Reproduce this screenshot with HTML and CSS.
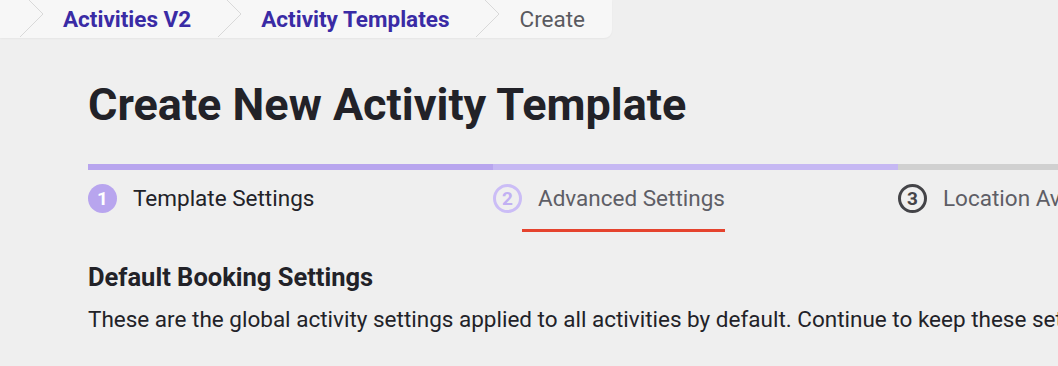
FILE: index.html
```html
<!DOCTYPE html>
<html>
  <head>
    <link rel="stylesheet" href="styles.css">
  </head>
  <body>
    <nav class="breadcrumb">
      <svg class="crumb-sep" width="24" height="38" viewBox="0 0 24 38"><polyline points="7,-2 23,14 0,37" fill="none" stroke="#d9d9d9" stroke-width="1"/></svg>
      <a class="crumb crumb-link">Activities V2</a>
      <svg class="crumb-sep" width="24" height="38" viewBox="0 0 24 38"><polyline points="7,-2 23,14 0,37" fill="none" stroke="#d9d9d9" stroke-width="1"/></svg>
      <a class="crumb crumb-link">Activity Templates</a>
      <svg class="crumb-sep" width="24" height="38" viewBox="0 0 24 38"><polyline points="7,-2 23,14 0,37" fill="none" stroke="#d9d9d9" stroke-width="1"/></svg>
      <span class="crumb crumb-current">Create</span>
    </nav>

    <main class="page">
      <h1 class="title">Create New Activity Template</h1>

      <div class="stepper">
        <div class="step step-done">
          <div class="step-bar"></div>
          <div class="step-body">
            <span class="step-icon">1</span>
            <span class="step-label">Template Settings</span>
          </div>
        </div>
        <div class="step step-active">
          <div class="step-bar"></div>
          <div class="step-body">
            <span class="step-icon">2</span>
            <span class="step-label">Advanced Settings</span>
          </div>
        </div>
        <div class="step step-todo">
          <div class="step-bar"></div>
          <div class="step-body">
            <span class="step-icon">3</span>
            <span class="step-label">Location Availability</span>
          </div>
        </div>
      </div>

      <h2 class="section-title">Default Booking Settings</h2>
      <p class="section-text">
        These are the global activity settings applied to all activities by default. Continue to keep these settings or change them for this template.
      </p>
    </main>
  </body>
</html>
```

FILE: styles.css
```css
body {
  margin: 0;
  background-color: #efefef;
  font-family: Roboto, "Liberation Sans", Arial, sans-serif;
  color: #222228;
  overflow: hidden;
}

.breadcrumb {
  display: flex;
  align-items: center;
  width: fit-content;
  height: 38px;
  padding-left: 20px;
  background-color: #f7f7f7;
  border-bottom-right-radius: 8px;
  box-shadow: 0 1px 2px rgba(0, 0, 0, 0.04);
}

.crumb-sep {
  display: block;
  flex-shrink: 0;
}

.crumb {
  font-size: 22.5px;
  line-height: 38px;
  padding: 0 27px 0 19px;
  white-space: nowrap;
}

.crumb-link {
  color: #3a2ba5;
  font-weight: 700;
  text-decoration: none;
}

.crumb-current {
  color: #5a5a60;
}

.page {
  padding-left: 88px;
  width: 1215px;
}

.title {
  font-size: 45px;
  font-weight: 700;
  line-height: 54px;
  margin: 40px 0 32px;
}

.stepper {
  display: flex;
}

.step {
  flex: 0 0 405px;
}

.step-bar {
  height: 6px;
  background-color: #d0d0d0;
}

.step-done .step-bar {
  background-color: #b8a5ee;
}

.step-active .step-bar {
  background-color: #c6b8f3;
}

.step-body {
  display: flex;
  align-items: flex-start;
  padding-top: 14px;
}

.step-icon {
  display: flex;
  align-items: center;
  justify-content: center;
  width: 29px;
  height: 29px;
  border-radius: 50%;
  box-sizing: border-box;
  font-size: 19px;
  font-weight: 700;
  flex-shrink: 0;
}

.step-done .step-icon {
  background-color: #b8a5ee;
  color: #fff;
}

.step-active .step-icon {
  border: 3px solid #cbbdf6;
  color: #c1b0f3;
}

.step-todo .step-icon {
  border: 3px solid #444448;
  color: #444448;
}

.step-label {
  font-size: 22.5px;
  line-height: 29px;
  padding: 0 0 16px 16px;
  white-space: nowrap;
}

.step-done .step-label {
  color: #222228;
}

.step-active .step-label,
.step-todo .step-label {
  color: #5e5e66;
}

.step-active .step-label {
  border-bottom: 3px solid #e5432e;
}

.section-title {
  font-size: 25.5px;
  font-weight: 700;
  margin: 30px 0 12px;
  line-height: 30px;
}

.section-text {
  font-size: 22.5px;
  line-height: 30px;
  margin: 0;
  white-space: nowrap;
}
```
